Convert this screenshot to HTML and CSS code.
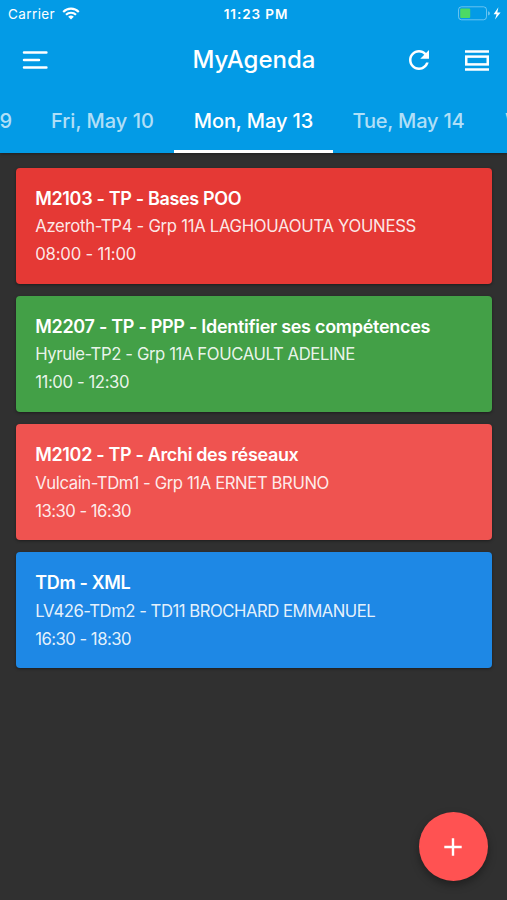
FILE: index.html
```
<!DOCTYPE html>
<html lang="fr">
<head>
    <meta charset="UTF-8">
    <meta name="viewport" content="width=device-width, initial-scale=1.0">
    <title>MyAgenda</title>
    <link rel="stylesheet" href="styles.css">
</head>
<body>
    <header class="header">
        <div class="status-bar">
            <div class="status-left">
                <span class="carrier">Carrier</span>
                <svg class="wifi" width="18" height="13" viewBox="0 0 18 13" fill="none" stroke="#fff" stroke-width="2.1">
                    <path d="M1.2 4.9a11 11 0 0 1 15.6 0"/>
                    <path d="M4 7.8a7 7 0 0 1 10 0"/>
                    <path d="M9 12.6L6.2 9.8a4 4 0 0 1 5.6 0z" fill="#fff" stroke="none"/>
                </svg>
            </div>
            <span class="clock">11:23 PM</span>
            <div class="status-right">
                <svg width="43" height="15" viewBox="0 0 43 15">
                    <rect x="0.5" y="0.8" width="28" height="13" rx="3" fill="none" stroke="#fff" stroke-opacity="0.4"/>
                    <rect x="2.2" y="2.5" width="10" height="9.4" rx="1" fill="#4cd964"/>
                    <path d="M30 5.2q2 .6 2 2.2t-2 2.2z" fill="#fff" fill-opacity="0.4"/>
                    <path d="M40.4 1.3L35.6 8.2h3L37 13.6l5.6-7.2h-3.3z" fill="#fff"/>
                </svg>
            </div>
        </div>

        <div class="app-bar">
            <svg class="icon-menu" width="26" height="20" viewBox="0 0 26 20" stroke="#fff" stroke-width="2.5" stroke-linecap="round">
                <path d="M2 2.4H24.4M2 9.9H17M2 17.4H24.4"/>
            </svg>
            <h1 class="app-title">MyAgenda</h1>
            <div class="actions">
                <svg width="30" height="30" viewBox="0 0 24 24" fill="#fff">
                    <path d="M17.65 6.35C16.2 4.9 14.21 4 12 4c-4.42 0-7.99 3.58-7.99 8s3.57 8 7.99 8c3.73 0 6.84-2.55 7.73-6h-2.08c-.82 2.33-3.04 4-5.65 4-3.31 0-6-2.69-6-6s2.69-6 6-6c1.66 0 3.14.69 4.22 1.78L13 11h7V4l-2.35 2.35z"/>
                </svg>
                <svg width="24" height="21" viewBox="0 0 24 21" fill="none" stroke="#fff" stroke-width="2.5">
                    <path d="M0 1.6H24M0 19.4H24"/>
                    <rect x="1.25" y="6.6" width="21.5" height="7.8"/>
                </svg>
            </div>
        </div>

        <nav class="tabs">
            <a class="tab tab-thu">Thu, May 9</a>
            <a class="tab tab-fri">Fri, May 10</a>
            <a class="tab tab-mon active">Mon, May 13</a>
            <a class="tab tab-tue">Tue, May 14</a>
            <a class="tab tab-wed">Wed, May 15</a>
        </nav>
    </header>

    <main class="events">
        <article class="event red">
            <h2 class="event-title">M2103 - TP - Bases POO</h2>
            <p class="event-info">Azeroth-TP4 - Grp 11A LAGHOUAOUTA YOUNESS</p>
            <p class="event-time">08:00 - 11:00</p>
        </article>
        <article class="event green">
            <h2 class="event-title">M2207 - TP - PPP - Identifier ses compétences</h2>
            <p class="event-info">Hyrule-TP2 - Grp 11A FOUCAULT ADELINE</p>
            <p class="event-time">11:00 - 12:30</p>
        </article>
        <article class="event coral">
            <h2 class="event-title">M2102 - TP - Archi des réseaux</h2>
            <p class="event-info">Vulcain-TDm1 - Grp 11A ERNET BRUNO</p>
            <p class="event-time">13:30 - 16:30</p>
        </article>
        <article class="event blue">
            <h2 class="event-title">TDm - XML</h2>
            <p class="event-info">LV426-TDm2 - TD11 BROCHARD EMMANUEL</p>
            <p class="event-time">16:30 - 18:30</p>
        </article>
    </main>

    <button class="fab" aria-label="Add">
        <svg width="18" height="18" viewBox="0 0 18 18" stroke="#fff" stroke-width="2.4">
            <path d="M9 0.3V17.7M0.3 9H17.7"/>
        </svg>
    </button>
</body>
</html>
```
FILE: styles.css
```
* {
    box-sizing: border-box;
}

body {
    margin: 0;
    height: 900px;
    background: #303030;
    color: #fff;
    font-family: Inter, Roboto, sans-serif;
    overflow: hidden;
}

.header {
    height: 153px;
    background: #039be6;
    box-shadow: 0 1px 3px rgba(0, 0, 0, 0.35);
}

.status-bar {
    display: grid;
    grid-template-columns: 1fr auto 1fr;
    align-items: center;
    height: 27px;
    padding: 0 6px 0 8px;
}

.status-left {
    display: flex;
    align-items: center;
    gap: 7px;
}

.carrier {
    font-size: 13.5px;
    letter-spacing: 0.4px;
}

.clock {
    margin-left: 3px;
    font-size: 13.5px;
    font-weight: 600;
    letter-spacing: 0.9px;
}

.status-right {
    display: flex;
    justify-content: flex-end;
}

.app-bar {
    display: grid;
    grid-template-columns: 1fr auto 1fr;
    align-items: center;
    height: 66px;
    padding: 0 18px 0 22px;
}

.app-title {
    margin: 0 3px 2px 0;
    font-size: 24px;
    font-weight: 500;
}

.actions {
    display: flex;
    align-items: center;
    justify-content: flex-end;
    gap: 31px;
}

.tabs {
    display: flex;
    height: 60px;
    overflow: hidden;
}

.tab {
    flex: none;
    display: flex;
    align-items: center;
    justify-content: center;
    width: 143px;
    padding-bottom: 1px;
    border-bottom: 3px solid transparent;
    color: rgba(255, 255, 255, 0.7);
    font-size: 20px;
    font-weight: 500;
    white-space: nowrap;
}

.tab.active {
    width: 159px;
    color: #fff;
    border-color: #fff;
}

.tab-thu {
    justify-content: flex-end;
    margin-left: -112px;
    padding-right: 19px;
}

.tab-mon {
    letter-spacing: -0.1px;
}

.tab-tue {
    width: 151px;
    letter-spacing: -0.2px;
}

.tab-wed {
    justify-content: flex-start;
    padding-left: 21px;
}

.events {
    display: flex;
    flex-direction: column;
    gap: 12.3px;
    padding: 14.6px 15px 0 15.6px;
}

.event {
    height: 116px;
    padding: 17px 20px 15px 19.6px;
    border-radius: 4px;
    box-shadow: 0 1px 3px rgba(0, 0, 0, 0.4);
    white-space: nowrap;
}

.event-title,
.event-info,
.event-time {
    margin: 0;
    line-height: 28px;
}

.event-title {
    margin-bottom: -0.6px;
    font-size: 18px;
    font-weight: 600;
    letter-spacing: -0.34px;
}

.event-info,
.event-time {
    font-size: 16.7px;
    letter-spacing: -0.4px;
    color: rgba(255, 255, 255, 0.9);
}

.red {
    background: #e53935;
}

.red .event-info {
    letter-spacing: -0.29px;
}

.red .event-time {
    letter-spacing: -0.17px;
}

.green {
    background: #43a047;
}

.green .event-title {
    letter-spacing: -0.29px;
}

.coral {
    background: #ef5350;
}

.blue {
    background: #1e88e5;
}

.blue .event-info {
    letter-spacing: -0.48px;
}

.coral .event-time,
.blue .event-time {
    letter-spacing: -0.52px;
}

.fab {
    position: absolute;
    left: 418.6px;
    top: 811.8px;
    display: flex;
    align-items: center;
    justify-content: center;
    width: 69px;
    height: 69px;
    padding: 1px 0 0;
    border: none;
    border-radius: 50%;
    background: #ff5252;
    box-shadow: 0 4px 8px rgba(0, 0, 0, 0.35);
}
```
